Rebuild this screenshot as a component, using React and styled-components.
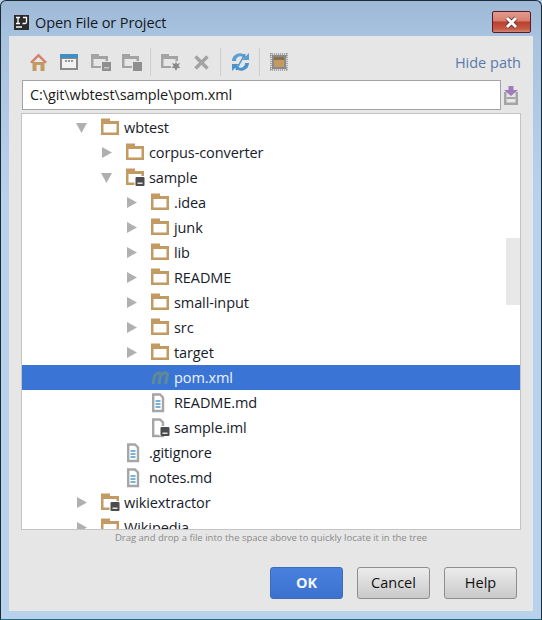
import React from 'react'
import styled, { createGlobalStyle } from 'styled-components'

const Global = createGlobalStyle`
  html, body { margin: 0; padding: 0; background: #b9d1ea; }
  body { font-family: "Open Sans", "Noto Sans", "Liberation Sans", sans-serif; }
`

const Win = styled.div`
  box-sizing: border-box;
  width: 542px;
  height: 620px;
  border: 1px solid #1c2a33;
  border-bottom-color: #1d6f80;
  border-radius: 6px 6px 0 0;
  background: linear-gradient(180deg, #9db9d6 0, #a8c3df 36px, #b9d2ec 200px, #b9d2ec 100%);
  padding: 0 8px 8px;
  display: flex;
  flex-direction: column;
`

const TitleBar = styled.div`
  box-sizing: border-box;
  height: 35px;
  flex: none;
  display: flex;
  align-items: center;
  padding: 8px 0 0 5px;
  gap: 6px;
  position: relative;
`

const TitleText = styled.span`
  font-size: 14.5px;
  color: #14191f;
  letter-spacing: -0.1px;
`

const CloseBtn = styled.div`
  position: absolute;
  top: 10px;
  right: 2px;
  width: 39px;
  height: 22px;
  box-sizing: border-box;
  border: 1px solid #5a1a24;
  border-radius: 2px;
  background: linear-gradient(180deg, #e39a8c 0, #d87f6f 45%, #b8402c 50%, #c65a45 85%, #d68a78 100%);
  display: flex;
  align-items: center;
  justify-content: center;
`

const Body = styled.div`
  flex: 1;
  background: #e6e6e6;
  display: flex;
  flex-direction: column;
  padding: 0 12px;
  min-height: 0;
`

const Toolbar = styled.div`
  box-sizing: border-box;
  height: 44px;
  flex: none;
  display: flex;
  align-items: center;
  padding: 8px 0 0 2px;
`

const ToolBtn = styled.div`
  width: ${p => p.$w}px;
  height: 24px;
  display: flex;
  align-items: center;
  justify-content: center;
`

const Sep = styled.div`
  width: 1px;
  height: 28px;
  background: #cfcfcf;
  margin: 0 ${p => p.$m}px;
`

const HidePath = styled.span`
  margin-left: auto;
  font-size: 14.5px;
  color: #5a79ae;
`

const PathRow = styled.div`
  display: flex;
  align-items: center;
  height: 30px;
  flex: none;
  gap: 3px;
`

const PathInput = styled.div`
  box-sizing: border-box;
  width: 479px;
  height: 30px;
  margin-left: 1px;
  border: 1px solid #a3a3a3;
  background: #fff;
  font-size: 14.5px;
  line-height: 28px;
  padding-left: 7px;
  color: #1a1a1a;
  letter-spacing: -0.1px;
`

const Tree = styled.div`
  box-sizing: border-box;
  position: relative;
  width: 500px;
  height: 417px;
  margin-top: 3px;
  flex: none;
  border: 1px solid #c4c4c4;
  background: #fff;
  overflow: hidden;
  padding-top: 1px;
`

const Thumb = styled.div`
  position: absolute;
  right: 0;
  top: 124px;
  width: 14px;
  height: 67px;
  background: #e8e8e8;
`

const Row = styled.div`
  height: 25px;
  display: flex;
  align-items: center;
  padding-left: ${p => 53 + p.$depth * 25}px;
  background: ${p => (p.$selected ? '#3a75d6' : 'transparent')};
`

const Arrow = styled.div`
  box-sizing: border-box;
  width: 24px;
  flex: none;
  display: flex;
  align-items: center;
  padding-left: 1px;
`

const IconSlot = styled.div`
  width: 24px;
  flex: none;
  height: 20px;
  display: flex;
  align-items: center;
`

const Label = styled.span`
  font-size: 14.5px;
  letter-spacing: -0.1px;
  color: ${p => (p.$selected ? '#eef2fb' : '#16202c')};
  margin-left: 1px;
`

const Hint = styled.div`
  height: 16px;
  flex: none;
  text-align: center;
  font-size: 9.5px;
  line-height: 15px;
  color: #8a8a8a;
`

const Buttons = styled.div`
  display: flex;
  justify-content: flex-end;
  gap: 14px;
  margin-top: 21px;
  padding-right: 4px;
`

const Btn = styled.div`
  box-sizing: border-box;
  width: 73px;
  height: 32px;
  border-radius: 3px;
  border: 1px solid ${p => (p.$primary ? '#3d6db8' : '#8e8e8e')};
  background: ${p =>
    p.$primary
      ? 'linear-gradient(180deg, #4a80de 0, #3b72cf 100%)'
      : 'linear-gradient(180deg, #ececec 0, #c9c9c9 100%)'};
  color: ${p => (p.$primary ? '#f2f6fd' : '#111')};
  font-size: 14.5px;
  font-weight: ${p => (p.$primary ? 700 : 400)};
  line-height: 29px;
  text-align: center;
`

function Badge({ x, y }) {
  return (
    <>
      <rect x={x - 1} y={y - 1} width="10" height="10" fill="#fff" />
      <rect x={x} y={y} width="9" height="9" rx="1" fill="#4c4c4c" />
      <rect x={x + 2} y={y + 5.5} width="5" height="1.5" fill="#ddd" />
    </>
  )
}

function FolderIcon({ module }) {
  return (
    <svg width="21" height="20" viewBox="0 0 21 20">
      <path d="M2 0.500 H11 V3 H20 V17 H2 Z M4.500 6 V14.500 H17.500 V6 Z" fill="#c29a62" fillRule="evenodd" />
      {module && <Badge x={11.5} y={9} />}
    </svg>
  )
}

function FileIcon({ module }) {
  return (
    <svg width="21" height="20" viewBox="0 0 21 20">
      <path d="M4.200 1.500 H11 L14 4.500 V18 H4.200 Z" fill="#fff" stroke="#a6a6a6" strokeWidth="2.400" />
      {!module && <path d="M6.500 8 H11.500 M6.500 11 H11.500 M6.500 14 H11.500" stroke="#4a9bc9" strokeWidth="1.300" />}
      {module && <Badge x={11.5} y={9} />}
    </svg>
  )
}

function MavenIcon() {
  return (
    <svg width="21" height="14" viewBox="0 0 21 14">
      <path d="M4 13 L6 3 M5.500 5 Q9 0 11.500 3 L10 13 M11.500 5 Q15 0 18.500 3 L16.500 13" fill="none" stroke="#5f8a94" strokeWidth="3" />
    </svg>
  )
}

function TreeArrow({ open }) {
  return (
    <svg width="11" height="11" viewBox="0 0 11 11">
      {open ? <path d="M0 1 H11 L5.500 11 Z" fill="#b0b0b0" /> : <path d="M1 0 L11 5.500 L1 11 Z" fill="#b0b0b0" />}
    </svg>
  )
}

const rows = [
  { d: 0, name: 'wbtest', arrow: 'open', icon: 'folder' },
  { d: 1, name: 'corpus-converter', arrow: 'closed', icon: 'folder' },
  { d: 1, name: 'sample', arrow: 'open', icon: 'module' },
  { d: 2, name: '.idea', arrow: 'closed', icon: 'folder' },
  { d: 2, name: 'junk', arrow: 'closed', icon: 'folder' },
  { d: 2, name: 'lib', arrow: 'closed', icon: 'folder' },
  { d: 2, name: 'README', arrow: 'closed', icon: 'folder' },
  { d: 2, name: 'small-input', arrow: 'closed', icon: 'folder' },
  { d: 2, name: 'src', arrow: 'closed', icon: 'folder' },
  { d: 2, name: 'target', arrow: 'closed', icon: 'folder' },
  { d: 2, name: 'pom.xml', icon: 'maven', selected: true },
  { d: 2, name: 'README.md', icon: 'file' },
  { d: 2, name: 'sample.iml', icon: 'iml' },
  { d: 1, name: '.gitignore', icon: 'file' },
  { d: 1, name: 'notes.md', icon: 'file' },
  { d: 0, name: 'wikiextractor', arrow: 'closed', icon: 'module' },
  { d: 0, name: 'Wikipedia', arrow: 'closed', icon: 'folder' },
]

function RowIcon({ icon }) {
  if (icon === 'folder') return <FolderIcon />
  if (icon === 'module') return <FolderIcon module />
  if (icon === 'maven') return <MavenIcon />
  if (icon === 'iml') return <FileIcon module />
  return <FileIcon />
}

export default function App() {
  return (
    <Win>
      <Global />
      <TitleBar>
        <svg width="15" height="15" viewBox="0 0 15 15">
          <rect width="15" height="15" fill="#2b2b2b" />
          <path d="M2 2.500 H6 M4 2.500 V8.500 M2 8.500 H6 M9 2.500 H12.500 V7 Q12.500 8.500 11 8.500 H8.500 M2 12 H8" stroke="#fff" strokeWidth="1.300" fill="none" />
        </svg>
        <TitleText>Open File or Project</TitleText>
        <CloseBtn>
          <svg width="15" height="13" viewBox="0 0 15 13">
            <path d="M3 2 L12 11 M12 2 L3 11" stroke="#5b2a24" strokeWidth="4.500" />
            <path d="M3 2 L12 11 M12 2 L3 11" stroke="#fff" strokeWidth="3" />
          </svg>
        </CloseBtn>
      </TitleBar>
      <Body>
        <Toolbar>
          <ToolBtn $w={30}>
            <svg width="17" height="18" viewBox="0 0 17 18">
              <path d="M2.500 9 V18 H6.500 V12 H10.500 V18 H14.500 V9 Z" fill="#c29a62" />
              <path d="M0 9 L8.500 0.500 L17 9 L15 10.500 L8.500 4 L2 10.500 Z" fill="#d4806e" />
            </svg>
          </ToolBtn>
          <ToolBtn $w={32}>
            <svg width="18" height="16" viewBox="0 0 18 16">
              <rect width="18" height="16" fill="#8a8a8a" />
              <rect width="18" height="4" fill="#3f8fc4" />
              <rect x="2" y="5" width="14" height="9" fill="#f2f2f2" />
              <path d="M5 7 H7 M8 7 H10 M11 7 H13" stroke="#777" strokeWidth="1.500" />
            </svg>
          </ToolBtn>
          <ToolBtn $w={31}>
            <svg width="20" height="18" viewBox="0 0 20 18">
              <path d="M0 1 H8 V3 H17 V15 H0 Z M2.500 6 V13 H14.500 V6 Z" fill="#a3a3a3" fillRule="evenodd" />
              <rect x="10" y="8" width="10" height="10" fill="#e6e6e6" />
              <rect x="11" y="9" width="9" height="9" fill="#8f8f8f" />
              <rect x="13" y="14" width="5" height="1.500" fill="#c8c8c8" />
            </svg>
          </ToolBtn>
          <ToolBtn $w={31}>
            <svg width="20" height="18" viewBox="0 0 20 18">
              <path d="M0 1 H8 V3 H17 V15 H0 Z M2.500 6 V13 H14.500 V6 Z" fill="#a3a3a3" fillRule="evenodd" />
              <rect x="10" y="8" width="10" height="10" fill="#e6e6e6" />
              <rect x="11" y="9" width="9" height="9" fill="#8f8f8f" />
            </svg>
          </ToolBtn>
          <Sep $m={3} />
          <ToolBtn $w={33}>
            <svg width="20" height="18" viewBox="0 0 20 18">
              <path d="M0 1 H8 V3 H17 V15 H0 Z M2.500 6 V13 H14.500 V6 Z" fill="#a3a3a3" fillRule="evenodd" />
              <rect x="10" y="8" width="10" height="10" fill="#e6e6e6" />
              <path d="M15 8 L16 11 L19 10 L17.500 13 L19.500 15 L16.500 15 L15 18 L13.500 15 L10.500 15 L12.500 13 L11 10 L14 11 Z" fill="#8a8a8a" />
            </svg>
          </ToolBtn>
          <ToolBtn $w={28}>
            <svg width="15" height="15" viewBox="0 0 15 15">
              <path d="M1.500 1.500 L13.500 13.500 M13.500 1.500 L1.500 13.500" stroke="#a3a3a3" strokeWidth="3.500" />
            </svg>
          </ToolBtn>
          <Sep $m={5} />
          <ToolBtn $w={28}>
            <svg width="19" height="18" viewBox="0 0 19 18">
              <path d="M18 0 V7 H11 L13 5 A4.500 4.500 0 0 0 5 8 L1 8 A8 8 0 0 1 15 3 Z" fill="#5a9fd2" />
              <path d="M1 18 V11 H8 L6 13 A4.500 4.500 0 0 0 14 10 L18 10 A8 8 0 0 1 4 15 Z" fill="#4a93cc" />
              <path d="M5 17 L14 1" stroke="#4a93cc" strokeWidth="1.500" />
            </svg>
          </ToolBtn>
          <Sep $m={5} />
          <ToolBtn $w={28}>
            <svg width="18" height="18" viewBox="0 0 18 18">
              <rect width="18" height="18" fill="#dcdcdc" />
              <path d="M0 1 H18 M0 3 H18 M0 15 H18 M0 17 H18 M1 0 V18 M17 0 V18" stroke="#777" strokeDasharray="1 1" />
              <rect x="2" y="2" width="14" height="14" fill="#8a8a8a" />
              <rect x="4" y="4" width="10" height="10" fill="#c29a62" />
              <rect x="4" y="4" width="10" height="3" fill="#8c6f48" />
            </svg>
          </ToolBtn>
          <HidePath>Hide path</HidePath>
        </Toolbar>
        <PathRow>
          <PathInput>C:\git\wbtest\sample\pom.xml</PathInput>
          <svg width="14" height="19" viewBox="0 0 14 19">
            <path d="M0 6 H2.500 V16.500 H11.500 V6 H14 V19 H0 Z" fill="#a5a5a5" />
            <rect x="2.500" y="11" width="9" height="2" fill="#a5a5a5" />
            <path d="M4.500 0 H9.500 V4 H14 L7 10 L0 4 H4.500 Z" fill="#a27bbc" />
          </svg>
        </PathRow>
        <Tree>
          {rows.map(r => (
            <Row key={r.name} $depth={r.d} $selected={r.selected}>
              <Arrow>{r.arrow && <TreeArrow open={r.arrow === 'open'} />}</Arrow>
              <IconSlot><RowIcon icon={r.icon} /></IconSlot>
              <Label $selected={r.selected}>{r.name}</Label>
            </Row>
          ))}
          <Thumb />
        </Tree>
        <Hint>Drag and drop a file into the space above to quickly locate it in the tree</Hint>
        <Buttons>
          <Btn $primary>OK</Btn>
          <Btn>Cancel</Btn>
          <Btn>Help</Btn>
        </Buttons>
      </Body>
    </Win>
  )
}
